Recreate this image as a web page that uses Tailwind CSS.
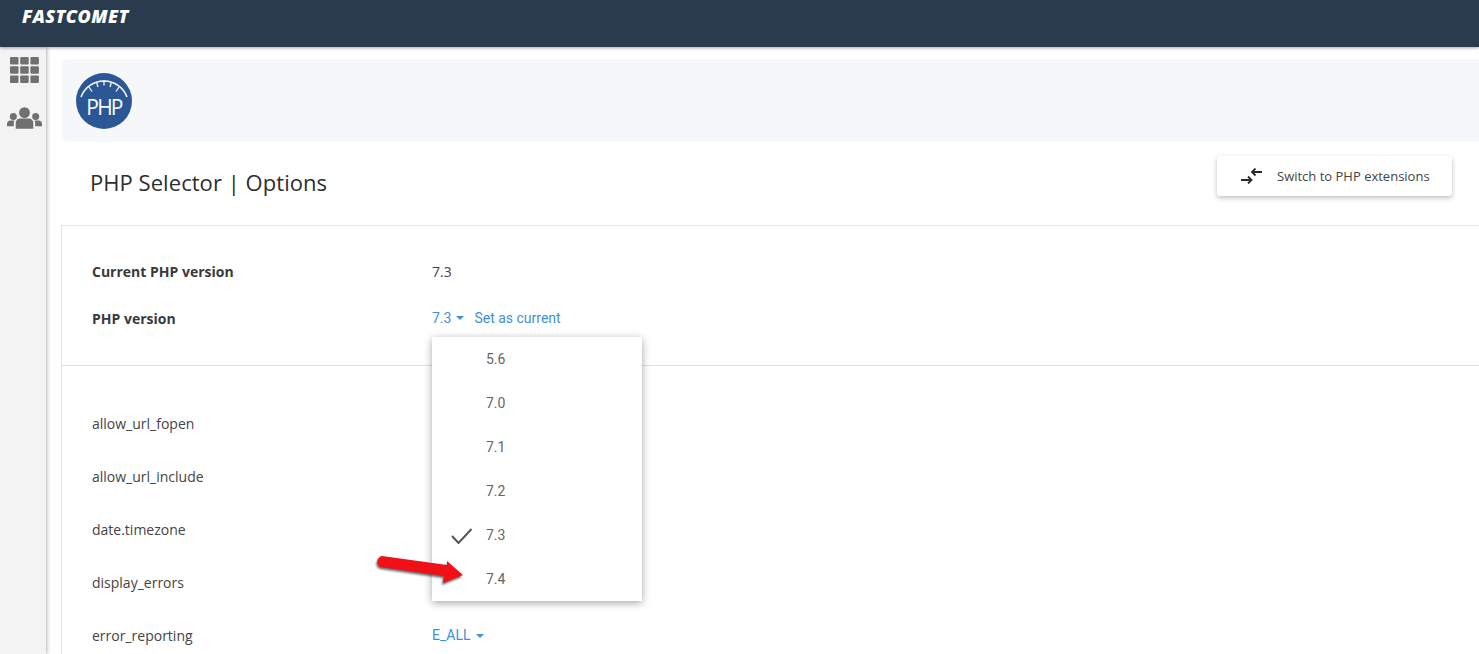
<!DOCTYPE html>
<html lang="en">
<head>
    <meta charset="UTF-8">
    <title>PHP Selector | Options</title>
    <script src="https://cdn.jsdelivr.net/npm/@tailwindcss/browser@4"></script>
</head>
<body class="h-[654px] overflow-hidden bg-white font-['Open_Sans',sans-serif] text-[#333]">
    <!-- top bar -->
    <header class="relative z-20 h-[47px] bg-[#2b3b4e] pl-[22px] pt-[6px] shadow-[0_1px_3px_rgba(0,0,0,0.35)]">
        <span class="block font-['Open_Sans',sans-serif] text-[18px] leading-[20px] font-extrabold italic tracking-[0.4px] text-white">FASTCOMET</span>
    </header>

    <div class="flex h-[607px]">
        <!-- sidebar -->
        <aside class="z-10 flex w-[46px] shrink-0 flex-col items-center bg-[#f3f3f3] pt-[10px] shadow-[1px_0_4px_rgba(0,0,0,0.3)]">
            <svg class="ml-[3px] h-[26px] w-[29px]" viewBox="0 0 29 26" fill="#707070">
                <rect x="0" y="0" width="8.5" height="7.5" rx="1"/><rect x="10.2" y="0" width="8.5" height="7.5" rx="1"/><rect x="20.4" y="0" width="8.5" height="7.5" rx="1"/>
                <rect x="0" y="9.2" width="8.5" height="7.5" rx="1"/><rect x="10.2" y="9.2" width="8.5" height="7.5" rx="1"/><rect x="20.4" y="9.2" width="8.5" height="7.5" rx="1"/>
                <rect x="0" y="18.4" width="8.5" height="7.5" rx="1"/><rect x="10.2" y="18.4" width="8.5" height="7.5" rx="1"/><rect x="20.4" y="18.4" width="8.5" height="7.5" rx="1"/>
            </svg>
            <svg class="mt-[24px] ml-[3px] h-[22px] w-[35px]" viewBox="0 0 36 22" fill="#707070">
                <circle cx="18" cy="5.5" r="5.5"/><circle cx="6.5" cy="9.5" r="3.6"/><circle cx="29.500" cy="9.5" r="3.6"/>
                <path d="M9 22v-6c0-3 2.500-4.500 5-4.500h8c2.500 0 5 1.500 5 4.500v6z"/>
                <path d="M0 19.500v-2.500c0-2 1.500-3.500 3.500-3.500h4.300C7 14.500 7 15 7 16v3.500z"/>
                <path d="M36 19.500v-2.500c0-2-1.500-3.500-3.500-3.500h-4.300c.8 1 .8 1.500.8 2.500v3.500z"/>
            </svg>
        </aside>

        <main class="relative min-w-0 flex-1 pt-[12px] pl-[16px]">
            <!-- plugin banner -->
            <div class="flex h-[83px] items-center rounded-l-md bg-[#f6f7f9] pl-[14px]">
                <svg class="h-[56px] w-[56px]" viewBox="0 0 56 56">
                    <circle cx="28" cy="28" r="28" fill="#2b5797"/>
                    <path d="M5 24 A24.500 24.500 0 0 1 51 24" fill="none" stroke="#fff" stroke-width="1.500"/>
                    <path d="M13 14l3 4.500M20.500 9l1.500 5M28 7v5.500M35.500 9L34 14M43 14l-3 4.500" stroke="#fff" stroke-width="1.200" fill="none"/>
                    <text x="28" y="42" text-anchor="middle" fill="#fff" font-family="Open Sans" font-size="21" letter-spacing="-1.800">PHP</text>
                </svg>
            </div>

            <!-- title row -->
            <div class="flex h-[83px] items-center justify-between pr-[27px] pl-[28px]">
                <h1 class="mb-[4px] text-[22px] leading-[30px] font-normal tracking-[0.05px] text-[#2e2e2e]">PHP Selector | Options</h1>
                <button class="mb-[15px] flex h-[40px] w-[235px] items-center rounded-[3px] bg-white pl-[24px] text-[13px] text-[#444] shadow-[0_2px_5px_rgba(0,0,0,0.25)]">
                    <svg class="mr-[14px] h-[16px] w-[22px]" viewBox="0 0 22 16" fill="none" stroke="#2a2a2a" stroke-width="1.800">
                        <path d="M0 12h10M7 8.500l3.500 3.500L7 15.500"/>
                        <path d="M21 4H11M14.500 .5L11 4l3.500 3.500"/>
                    </svg>
                    <span class="mt-[2px]">Switch to PHP extensions</span>
                </button>
            </div>

            <!-- options card -->
            <div class="-ml-px border-t border-l border-[#e6e6e6]">
                <section class="h-[140px] border-b border-[#e0e0e0] pt-[25px] pl-[30px] text-[14px]">
                    <div class="flex h-[40px] items-center">
                        <span class="w-[340px] font-bold text-[#3a3a3a]">Current PHP version</span>
                        <span class="text-[#444]">7.3</span>
                    </div>
                    <div class="mt-[7px] flex h-[40px] items-center">
                        <span class="w-[340px] font-bold text-[#3a3a3a]">PHP version</span>
                        <span class="flex items-center font-['Roboto',sans-serif] text-[#3f8fd8]">7.3
                            <i class="mr-[10px] ml-[5px] block h-0 w-0 border-x-[4px] border-t-[4px] border-x-transparent border-t-[#3f8fd8]"></i>
                            Set as current</span>
                    </div>
                </section>
                <section class="pt-[31px] pl-[30px] text-[14px] text-[#444]">
                    <div class="flex h-[53px] items-center">allow_url_fopen</div>
                    <div class="flex h-[53px] items-center">allow_url_include</div>
                    <div class="flex h-[53px] items-center">date.timezone</div>
                    <div class="flex h-[53px] items-center">display_errors</div>
                    <div class="flex h-[53px] items-center">
                        <span class="w-[340px]">error_reporting</span>
                        <span class="flex items-center font-['Roboto',sans-serif] text-[#3f8fd8]">E_ALL
                            <i class="ml-[5px] block h-0 w-0 border-x-[4px] border-t-[4px] border-x-transparent border-t-[#3f8fd8]"></i></span>
                    </div>
                </section>
            </div>

            <!-- version dropdown -->
            <ul class="absolute top-[290px] left-[386px] w-[210px] bg-white font-['Roboto',sans-serif] text-[14px] text-[#666] shadow-[0_2px_8px_rgba(0,0,0,0.35)]">
                <li class="flex h-[44px] items-center pl-[54px]">5.6</li>
                <li class="flex h-[44px] items-center pl-[54px]">7.0</li>
                <li class="flex h-[44px] items-center pl-[54px]">7.1</li>
                <li class="flex h-[44px] items-center pl-[54px]">7.2</li>
                <li class="flex h-[44px] items-center pl-[19px]">
                    <svg class="mt-[2px] mr-[13px] h-[16px] w-[22px]" viewBox="0 0 22 16" fill="none" stroke="#555" stroke-width="2"><path d="M1 8l6.500 7L20.500 1"/></svg>
                    7.3
                </li>
                <li class="flex h-[44px] items-center pl-[54px]">7.4</li>
            </ul>

            <!-- red annotation arrow -->
            <svg class="absolute top-[504px] left-[330px] h-[34px] w-[92px] drop-shadow-[-1px_2px_1px_rgba(0,0,0,0.6)]" viewBox="0 0 92 34">
                <path d="M6 5 L71 14 L71 10 L87 24 L67 32 L68 25 L5 16 C0 15 0 6 6 5z" fill="#f01015"/>
            </svg>
        </main>
    </div>
</body>
</html>
